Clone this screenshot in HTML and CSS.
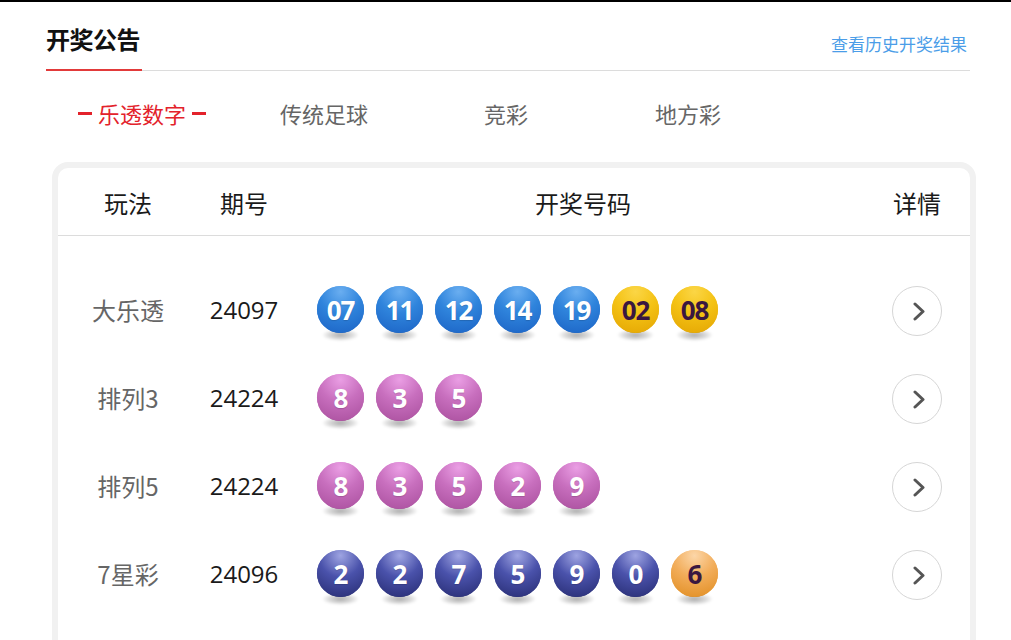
FILE: index.html
```html
<!DOCTYPE html>
<html lang="zh-CN">
<head>
<meta charset="utf-8">
<title>开奖公告</title>
<link rel="stylesheet" href="styles.css">
</head>
<body>
<div class="page">
  <div class="wrap">
    <header class="head">
      <h2 class="title">开奖公告</h2>
      <a class="more" href="#">查看历史开奖结果</a>
    </header>
    <nav class="tabs">
      <span class="tab active">乐透数字</span>
      <span class="tab">传统足球</span>
      <span class="tab">竞彩</span>
      <span class="tab">地方彩</span>
    </nav>
    <section class="card">
      <div class="grid thead">
        <div class="c">玩法</div>
        <div class="c">期号</div>
        <div class="c">开奖号码</div>
        <div class="c">详情</div>
      </div>
      <div class="tbody">
        <div class="grid row">
          <div class="c name">大乐透</div>
          <div class="c num">24097</div>
          <div class="balls">
            <span class="ball blue">07</span><span class="ball blue">11</span><span class="ball blue">12</span><span class="ball blue">14</span><span class="ball blue">19</span><span class="ball yellow">02</span><span class="ball yellow">08</span>
          </div>
          <div class="c"><a class="go" href="#"><svg width="12" height="19" viewBox="0 0 12 19"><polyline points="2,2 10,9.5 2,17" fill="none" stroke="#555" stroke-width="3" stroke-linecap="round" stroke-linejoin="round"/></svg></a></div>
        </div>
        <div class="grid row">
          <div class="c name">排列3</div>
          <div class="c num">24224</div>
          <div class="balls">
            <span class="ball pink">8</span><span class="ball pink">3</span><span class="ball pink">5</span>
          </div>
          <div class="c"><a class="go" href="#"><svg width="12" height="19" viewBox="0 0 12 19"><polyline points="2,2 10,9.5 2,17" fill="none" stroke="#555" stroke-width="3" stroke-linecap="round" stroke-linejoin="round"/></svg></a></div>
        </div>
        <div class="grid row">
          <div class="c name">排列5</div>
          <div class="c num">24224</div>
          <div class="balls">
            <span class="ball pink">8</span><span class="ball pink">3</span><span class="ball pink">5</span><span class="ball pink">2</span><span class="ball pink">9</span>
          </div>
          <div class="c"><a class="go" href="#"><svg width="12" height="19" viewBox="0 0 12 19"><polyline points="2,2 10,9.5 2,17" fill="none" stroke="#555" stroke-width="3" stroke-linecap="round" stroke-linejoin="round"/></svg></a></div>
        </div>
        <div class="grid row">
          <div class="c name">7星彩</div>
          <div class="c num">24096</div>
          <div class="balls">
            <span class="ball navy">2</span><span class="ball navy">2</span><span class="ball navy">7</span><span class="ball navy">5</span><span class="ball navy">9</span><span class="ball navy">0</span><span class="ball orange">6</span>
          </div>
          <div class="c"><a class="go" href="#"><svg width="12" height="19" viewBox="0 0 12 19"><polyline points="2,2 10,9.5 2,17" fill="none" stroke="#555" stroke-width="3" stroke-linecap="round" stroke-linejoin="round"/></svg></a></div>
        </div>
      </div>
    </section>
  </div>
</div>
</body>
</html>
```

FILE: styles.css
```css
html, body {
  margin: 0;
  padding: 0;
  background: #fff;
  overflow: hidden;
}
body {
  font-family: "Noto Sans CJK SC", "Noto Sans", sans-serif;
  color: #222;
}
.page {
  border-top: 2px solid #000;
  height: 638px;
}
.wrap {
  width: 924px;
  padding-left: 46px;
}
.head {
  display: flex;
  justify-content: space-between;
  align-items: flex-end;
  border-bottom: 1px solid #dcdcdc;
}
.title {
  margin: 21px 0 -1px 0;
  padding-bottom: 14px;
  border-bottom: 2px solid #e23a3a;
  font-size: 24px;
  line-height: 32px;
  font-weight: 700;
  color: #111;
  width: 96px;
  letter-spacing: -0.5px;
  white-space: nowrap;
}
.more {
  font-size: 17px;
  line-height: 24px;
  margin: 0 3px 14px 0;
  color: #4b9de8;
  text-decoration: none;
}
.tabs {
  display: flex;
  padding-left: 5px;
  margin-top: 27px;
}
.tab {
  width: 182px;
  display: flex;
  justify-content: center;
  align-items: center;
  font-size: 22px;
  line-height: 30px;
  color: #666;
}
.tab.active {
  color: #e3222b;
}
.tab.active::before,
.tab.active::after {
  content: "";
  width: 14px;
  height: 3px;
  background: #e3222b;
  margin: 0 6px;
}
.card {
  margin-top: 34px;
  margin-left: 6px;
  width: 924px;
  height: 520px;
  box-sizing: border-box;
  border: 6px solid #f1f1f1;
  border-radius: 16px;
}
.grid {
  display: grid;
  grid-template-columns: 140px 92px 586px 82px;
  align-items: center;
}
.c {
  display: flex;
  justify-content: center;
  align-items: center;
}
.thead {
  height: 68px;
  box-sizing: border-box;
  padding-top: 2px;
  border-bottom: 1px solid #dcdcdc;
  font-size: 24px;
  line-height: 30px;
  color: #1a1a1a;
}
.tbody {
  padding-top: 31px;
}
.row {
  height: 88px;
}
.name {
  font-size: 24px;
  color: #666;
  margin-bottom: 4px;
}
.num {
  font-family: "Open Sans", "Noto Sans", sans-serif;
  font-size: 24px;
  color: #1a1a1a;
  margin-bottom: 4px;
}
.balls {
  display: flex;
  gap: 12px;
  padding-left: 27px;
}
.ball {
  position: relative;
  isolation: isolate;
  width: 47px;
  height: 47px;
  border-radius: 50%;
  margin-bottom: 3px;
  display: flex;
  justify-content: center;
  align-items: center;
  font-family: "Open Sans", "Noto Sans", sans-serif;
  font-weight: 700;
  font-size: 26px;
  letter-spacing: -1px;
  color: #fff;
  text-shadow: 0 1px 1px rgba(0,0,0,0.15);
}
.ball::before {
  content: "";
  position: absolute;
  inset: 0;
  border-radius: 50%;
  background: inherit;
  z-index: -1;
}
.ball::after {
  content: "";
  position: absolute;
  left: 5px;
  right: 5px;
  bottom: -8px;
  height: 12px;
  border-radius: 50%;
  background: radial-gradient(ellipse at center, rgba(0,0,0,0.32) 0%, rgba(0,0,0,0.14) 45%, rgba(0,0,0,0) 72%);
  filter: blur(1px);
  z-index: -2;
}
.blue {
  background: radial-gradient(circle at 50% 12%, #6aaef0 0%, #2f84dc 45%, #1b62c4 100%);
}
.yellow {
  background: radial-gradient(circle at 50% 12%, #fbd646 0%, #f4c214 45%, #e3a402 100%);
  color: #3a1740;
  text-shadow: none;
}
.pink {
  background: radial-gradient(circle at 50% 12%, #ea9ee4 0%, #c86fbe 45%, #a84e9c 100%);
}
.navy {
  background: radial-gradient(circle at 50% 12%, #9ea4e2 0%, #4a52ab 45%, #262b70 100%);
}
.orange {
  background: radial-gradient(circle at 50% 12%, #fcd6a8 0%, #f2ad5a 45%, #e08c1f 100%);
  color: #3a1740;
  text-shadow: none;
}
.go {
  width: 50px;
  height: 50px;
  box-sizing: border-box;
  border: 1px solid #d6d6d6;
  border-radius: 50%;
  display: flex;
  justify-content: center;
  align-items: center;
  padding-left: 3px;
}
```
